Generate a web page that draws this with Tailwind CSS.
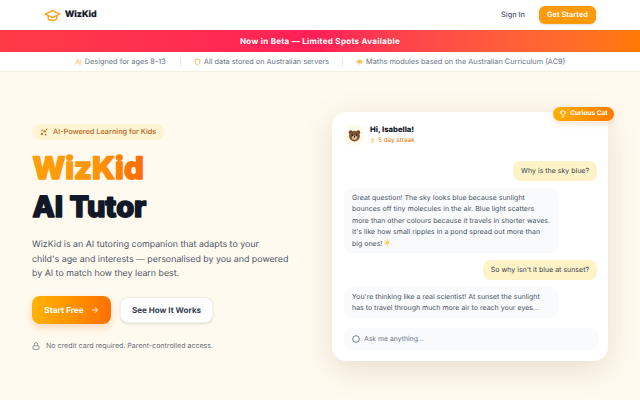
<!DOCTYPE html>
<html><head><meta charset="utf-8"><script src="https://cdn.jsdelivr.net/npm/@tailwindcss/browser@4"></script></head>
<body class="w-[640px] h-[400px] overflow-hidden bg-[#fffaf0] font-['Inter',sans-serif] [text-rendering:geometricPrecision]">
<header class="h-[30px] bg-white flex items-center justify-between pl-[44px] pr-[44px]">
  <div class="flex items-center gap-[4px]">
    <svg class="w-[17px] h-[17px]" viewBox="0 0 24 24" fill="none" stroke="#f9a11b" stroke-width="2" stroke-linecap="round" stroke-linejoin="round"><path d="M22 10 12 5 2 10l10 5 10-5Z"/><path d="M6 12.5V16c0 1.5 3 3 6 3s6-1.5 6-3v-3.5"/></svg>
    <span class="font-extrabold text-[8.8px] text-[#111827] [-webkit-text-stroke:0.2px_#111827]">WizKid</span>
  </div>
  <div class="flex items-center gap-[14px]">
    <span class="text-[7.33px] font-medium text-[#4b5563]">Sign In</span>
    <span class="h-[18px] w-[57px] rounded-[6px] bg-[#ff9a0a] text-white text-[7.45px] font-semibold flex items-center justify-center shadow-sm">Get Started</span>
  </div>
</header>
<div class="h-[22px] bg-gradient-to-r from-[#ff3b47] via-[#ff1f57] to-[#ff7a00] flex items-center justify-center text-white text-[8px] font-bold tracking-[0.3px]">Now in Beta — Limited Spots Available</div>
<div class="h-[20px] pt-[1px] bg-white flex items-center justify-center text-[7.33px] text-[#6b7280] border-b border-[#f6f0e2]">
  <span class="flex items-center gap-[3px]"><svg class="w-[7px] h-[8px]" viewBox="0 0 24 24" fill="none" stroke="#f9b44a" stroke-width="2.5"><circle cx="9" cy="8" r="4"/><path d="M2 21c0-4 3-7 7-7s7 3 7 7"/><path d="M16 4a4 4 0 0 1 0 8M18 14c2.5 1 4 3.5 4 7"/></svg>Designed for ages 8–13</span>
  <span class="w-px h-[9px] bg-[#e5e7eb] ml-[14px] mr-[13px]"></span>
  <span class="flex items-center gap-[3px]"><svg class="w-[7px] h-[8px]" viewBox="0 0 24 24" fill="none" stroke="#f9a11b" stroke-width="2.5"><path d="M12 2 4 5v7c0 5 4 8 8 10 4-2 8-5 8-10V5Z"/></svg>All data stored on Australian servers</span>
  <span class="w-px h-[9px] bg-[#e5e7eb] ml-[13px] mr-[13px]"></span>
  <span class="flex items-center gap-[3px]"><svg class="w-[7px] h-[8px]" viewBox="0 0 24 24" fill="#f9c35c" stroke="#f5a623" stroke-width="2"><path d="M22 10 12 5 2 10l10 5 10-5Z"/><path d="M6 13v3c0 1.5 3 3 6 3s6-1.5 6-3v-3" fill="none"/></svg>Maths modules based on the Australian Curriculum (AC9)</span>
</div>
<main class="flex pl-[32px] pr-[32px] justify-between items-start">
  <section class="w-[262px] pt-[52px]">
    <div class="flex w-fit items-center gap-[5px] h-[16px] px-[8px] rounded-full bg-[#fef5d3] text-[7.33px] font-medium text-[#b45f1a]">
      <svg class="w-[8px] h-[8px]" viewBox="0 0 24 24" fill="#c2691c"><circle cx="6" cy="18" r="3.5"/><circle cx="14" cy="10" r="3.5"/><circle cx="6" cy="7" r="2.5"/><circle cx="20" cy="4" r="2.5"/><circle cx="17" cy="20" r="2.5"/></svg>
      AI-Powered Learning for Kids</div>
    <svg class="block mt-[8px] w-[240px] h-[78px] font-extrabold" viewBox="0 0 240 78" role="img" aria-label="WizKid AI Tutor">
      <defs><linearGradient id="g" gradientUnits="userSpaceOnUse" x1="0" y1="0" x2="112" y2="0"><stop offset="0" stop-color="#ff9f0a"/><stop offset="0.6" stop-color="#ff9405"/><stop offset="1" stop-color="#ff6a00"/></linearGradient></defs>
      <text x="0.5" y="31" font-size="31" fill="url(#g)" stroke="url(#g)" stroke-width="1.6" stroke-linejoin="round">WizKid</text>
      <text x="0.5" y="69" font-size="29" fill="#111827" stroke="#111827" stroke-width="1.6" stroke-linejoin="round">AI Tutor</text>
    </svg>
    <p class="mt-[12px] text-[8.83px] leading-[14.67px] text-[#4b5563]">WizKid is an AI tutoring companion that adapts to your<br>child's age and interests — personalised by you and powered<br>by AI to match how they learn best.</p>
    <div class="mt-[14px] flex items-center gap-[9px]">
      <span class="w-[79px] h-[28px] rounded-[8px] bg-gradient-to-r from-[#ffb300] to-[#ff6f00] text-white text-[8.25px] font-bold flex items-center justify-center gap-[7px] shadow-[0_4px_8px_rgba(249,115,22,0.25)]">Start Free
        <svg class="w-[8px] h-[8px]" viewBox="0 0 24 24" fill="none" stroke="white" stroke-width="2.5" stroke-linecap="round" stroke-linejoin="round"><path d="M4 12h16M13 5l7 7-7 7"/></svg></span>
      <span class="w-[93px] h-[26px] rounded-[8px] bg-white border border-[#f3f0e8] text-[#374151] text-[8.07px] font-bold flex items-center justify-center shadow-sm">See How It Works</span>
    </div>
    <div class="mt-[17px] flex items-center gap-[6px] text-[7.07px] text-[#6b7280]">
      <svg class="w-[8px] h-[8px]" viewBox="0 0 24 24" fill="none" stroke="#6b7280" stroke-width="2.2"><rect x="3" y="11" width="18" height="11" rx="2"/><path d="M7 11V7a5 5 0 0 1 10 0v4"/></svg>
      No credit card required. Parent-controlled access.</div>
  </section>
  <section class="relative w-[276px] h-[249px] mt-[40px] rounded-[14px] bg-white shadow-[0_8px_30px_rgba(120,90,40,0.18)] pl-[12px] pr-[11px] pt-[13px]">
    <span class="absolute -top-[5px] right-[-6px] h-[14px] w-[61px] rounded-full bg-gradient-to-r from-[#ffb000] to-[#ff7a00] text-white text-[6.5px] font-bold flex items-center justify-center gap-[3px] shadow-[0_3px_6px_rgba(249,115,22,0.2)]">
      <svg class="w-[8px] h-[8px]" viewBox="0 0 24 24" fill="none" stroke="white" stroke-width="2.2"><path d="M7 3h10v7a5 5 0 0 1-10 0Z"/><path d="M7 5H3v2a4 4 0 0 0 4 4M17 5h4v2a4 4 0 0 1-4 4M12 15v4M8 21h8"/></svg>Curious Cat</span>
    <div class="flex items-center gap-[5px]">
      <span class="w-[20px] h-[20px] rounded-[6px] bg-[#fffbeb] flex items-center justify-center"><svg class="w-[13px] h-[13px]" viewBox="0 0 24 24"><circle cx="5" cy="6" r="3.5" fill="#6b4226"/><circle cx="19" cy="6" r="3.5" fill="#6b4226"/><circle cx="12" cy="13" r="10" fill="#7d5233"/><ellipse cx="12" cy="16" rx="5" ry="4" fill="#d9b48f"/><circle cx="8" cy="11" r="1.3" fill="#111"/><circle cx="16" cy="11" r="1.3" fill="#111"/><circle cx="12" cy="14.5" r="1.4" fill="#111"/></svg></span>
      <div class="pl-[1px]">
        <div class="font-extrabold text-[7.67px] leading-[10px] text-[#111827]">Hi, Isabella!</div>
        <div class="flex items-center gap-[3px] text-[6.33px] leading-[10px] text-[#d97706]"><svg class="w-[5px] h-[6px]" viewBox="0 0 24 24" fill="none" stroke="#f59e0b" stroke-width="2.5"><path d="M12 2c1 5 7 7 7 13a7 7 0 0 1-14 0c0-3 2-4 3-6 1 2 2 2 3 2 1-3 0-6 1-9Z"/></svg>5 day streak</div>
      </div>
    </div>
    <div class="mt-[16px] flex flex-col gap-[7px] text-[7px] leading-[11.4px] text-[#4b5563]">
      <div class="self-end bg-[#fef3c7] text-[#374151] rounded-[8px] px-[8px] h-[20px] flex items-center">Why is the sky blue?</div>
      <div class="w-[214px] bg-[#f8fafc] rounded-[8px] pl-[8px] pr-[6px] py-[4px]">Great question! The sky looks blue because sunlight bounces off tiny molecules in the air. Blue light scatters more than other colours because it travels in shorter waves. It's like how small ripples in a pond spread out more than big ones! <svg class="inline-block align-[-1px] w-[8px] h-[8px]" viewBox="0 0 24 24" fill="#fbcb5a" stroke="#fbcb5a" stroke-width="2.5" stroke-linecap="round"><circle cx="10" cy="11" r="4.5"/><path d="M10 1v3M10 18v3M1 11h3M2.5 4l2 2M16 5l2-2M3 18l2-2"/><path d="M17 16h5" stroke="#e9e4d4"/></svg></div>
      <div class="self-end bg-[#fef3c7] text-[#374151] rounded-[8px] px-[8px] h-[20px] flex items-center">So why isn't it blue at sunset?</div>
      <div class="w-[214px] bg-[#f8fafc] rounded-[8px] pl-[8px] pr-[6px] py-[4px]">You're thinking like a real scientist! At sunset the sunlight has to travel through much more air to reach your eyes...</div>
    </div>
    <div class="mt-[10px] h-[22px] rounded-[8px] bg-[#f8fafc] flex items-center gap-[4px] px-[8px] text-[6.85px] text-[#6b7280] w-[254px]">
      <svg class="w-[8px] h-[8px]" viewBox="0 0 24 24" fill="none" stroke="#4b5563" stroke-width="2.2"><circle cx="12" cy="12" r="10"/></svg>Ask me anything...</div>
  </section>
</main>
</body></html>
